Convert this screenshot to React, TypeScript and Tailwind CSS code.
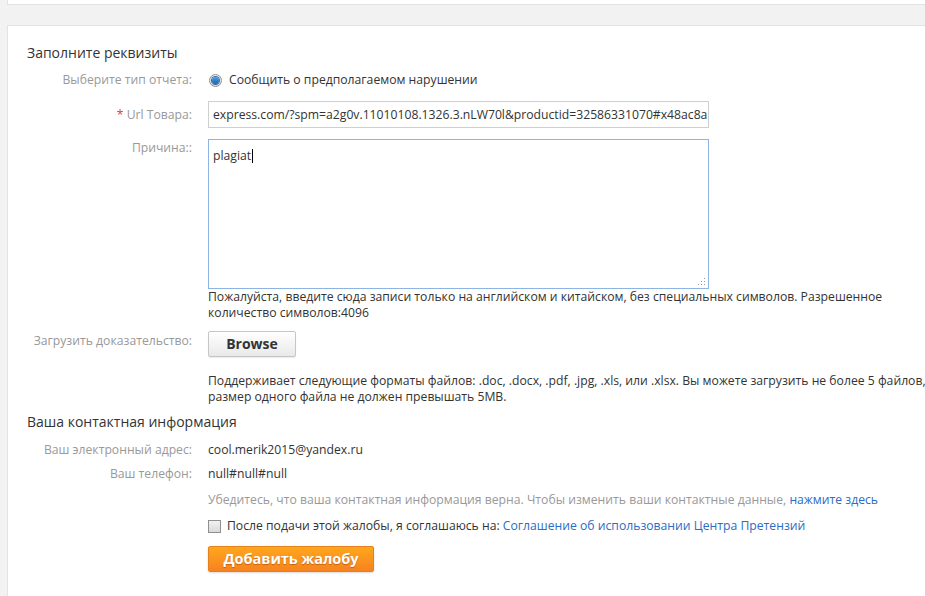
import React from "react";

const Label = ({ children, className = "" }: { children: React.ReactNode; className?: string }) => (
  <div className={`w-[184px] shrink-0 text-right text-[#999] ${className}`}>{children}</div>
);

const Radio = () => (
  <span className="flex h-[13px] w-[13px] items-center justify-center rounded-full border border-[#8f8f8f] bg-gradient-to-b from-[#f4f4f4] to-[#dcdcdc]">
    <span className="h-[7px] w-[7px] rounded-full bg-gradient-to-b from-[#4aa3e8] to-[#1c5fa8] ring-1 ring-[#2c6cb3]" />
  </span>
);

const ResizeGrip = () => (
  <svg width="8" height="8" viewBox="0 0 8 8" className="absolute bottom-[2px] right-[2px]">
    <rect x="6" y="0" width="1" height="1" fill="#9a9a9a" />
    <rect x="3" y="3" width="1" height="1" fill="#9a9a9a" />
    <rect x="6" y="3" width="1" height="1" fill="#9a9a9a" />
    <rect x="0" y="6" width="1" height="1" fill="#9a9a9a" />
    <rect x="3" y="6" width="1" height="1" fill="#9a9a9a" />
    <rect x="6" y="6" width="1" height="1" fill="#9a9a9a" />
  </svg>
);

export default function App() {
  return (
    <div className="min-h-[596px] overflow-hidden bg-[#f2f2f2] text-[12.2px] leading-4 text-[#333]" style={{ fontFamily: '"Open Sans", "Noto Sans", sans-serif' }}>
      {/* top panel tail */}
      <div className="ml-[7px] h-[5px] border-b border-l border-[#e3e3e3] bg-white" />

      <div className="ml-[7px] mt-5 border-l border-t border-[#e3e3e3] bg-white pb-6 pt-[17px]">
        <h2 className="pl-[19px] text-[14px] leading-5 text-[#333]">Заполните реквизиты</h2>

        <div className="mt-[5px] flex h-6 items-center gap-4">
          <Label>Выберите тип отчета:</Label>
          <div className="flex items-center gap-[7px] pl-[1px]">
            <Radio />
            <span className="text-[#333]">Сообщить о предполагаемом нарушении</span>
          </div>
        </div>

        <div className="mt-[9px] flex items-center gap-4">
          <Label>
            <span className="text-[#e4393c]">*</span> Url Товара:
          </Label>
          <div className="flex h-[27px] w-[501px] items-center overflow-hidden whitespace-nowrap border border-[#cfcfcf] px-[4px] text-[#333]">
            express.com/?spm=a2g0v.11010108.1326.3.nLW70l&amp;productid=32586331070#x48ac8a
          </div>
        </div>

        <div className="mt-[11px] flex gap-4">
          <Label className="pt-[1px]">Причина::</Label>
          <div className="w-[724px] shrink-0">
            <div className="relative h-[150px] w-[501px] border border-[#8db4e2] px-[4px] pt-[8px]">
              <span>plagiat</span>
              <span className="ml-[1px] inline-block h-[14px] w-[1px] bg-black align-[-3px]" />
              <ResizeGrip />
            </div>
            <p className="leading-4">
              Пожалуйста, введите сюда записи только на английском и китайском, без специальных символов. Разрешенное количество символов:4096
            </p>
          </div>
        </div>

        <div className="mt-[10px] flex gap-4">
          <Label className="pt-[2px]">Загрузить доказательство:</Label>
          <div className="w-[724px] shrink-0">
            <button className="h-[26px] w-[88px] rounded-[2px] border border-[#c6c6c6] bg-gradient-to-b from-white to-[#e9e9e9] text-[14px] font-bold text-[#333] shadow-[0_1px_1px_rgba(0,0,0,0.08)]">
              Browse
            </button>
            <p className="mt-4 leading-[15.5px]">
              Поддерживает следующие форматы файлов: .doc, .docx, .pdf, .jpg, .xls, или .xlsx. Вы можете загрузить не более 5 файлов, размер одного файла не должен превышать 5MB.
            </p>
          </div>
        </div>

        <h2 className="mt-2 pl-[19px] text-[14px] leading-5 text-[#333]">Ваша контактная информация</h2>

        <div className="mt-2 flex h-5 items-center gap-4">
          <Label>Ваш электронный адрес:</Label>
          <span>cool.merik2015@yandex.ru</span>
        </div>

        <div className="mt-1 flex h-5 items-center gap-4">
          <Label>Ваш телефон:</Label>
          <span>null#null#null</span>
        </div>

        <div className="mt-[6px] flex h-5 items-center gap-4">
          <Label />
          <span className="whitespace-nowrap text-[#999]">
            Убедитесь, что ваша контактная информация верна. Чтобы изменить ваши контактные данные,{" "}
            <a className="text-[#2b6cc4]">нажмите здесь</a>
          </span>
        </div>

        <div className="mt-[6px] flex h-5 items-center gap-4">
          <Label />
          <div className="flex items-center gap-[6px]">
            <span className="h-[13px] w-[13px] border border-[#8f8f8f] bg-gradient-to-b from-[#f1f1f1] to-[#dadada]" />
            <span className="whitespace-nowrap">
              После подачи этой жалобы, я соглашаюсь на:{" "}
              <a className="text-[#2b6cc4]">Соглашение об использовании Центра Претензий</a>
            </span>
          </div>
        </div>

        <div className="mt-[10px] flex gap-4">
          <Label />
          <button className="h-[26px] w-[166px] rounded-[2px] border border-[#e5801e] bg-gradient-to-b from-[#ffa71c] to-[#f7821f] text-[14.5px] font-bold text-white shadow-[0_1px_2px_rgba(0,0,0,0.15)] [text-shadow:0_1px_1px_rgba(160,70,0,0.6)]">
            Добавить жалобу
          </button>
        </div>
      </div>
    </div>
  );
}
